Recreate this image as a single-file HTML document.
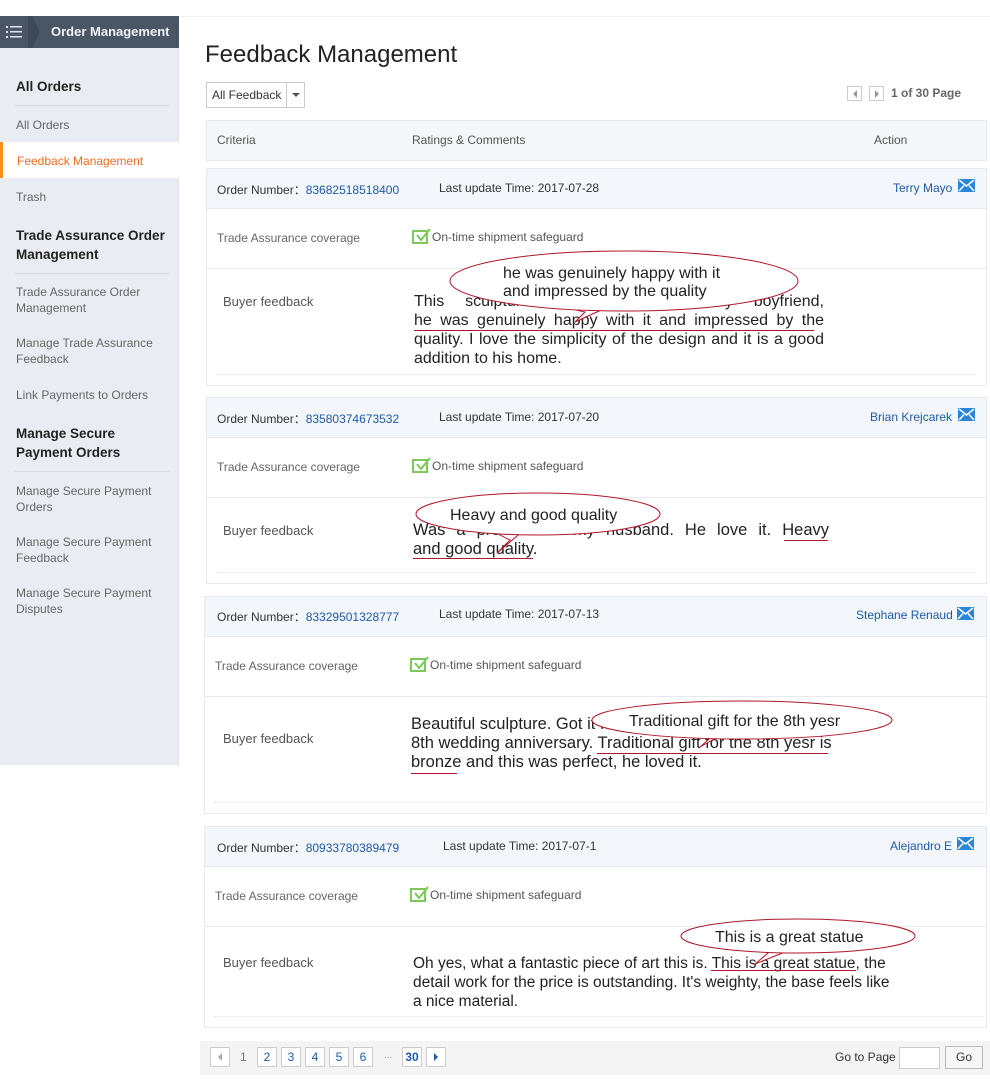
<!DOCTYPE html>
<html><head><meta charset="utf-8"><style>
*{margin:0;padding:0;box-sizing:border-box}
body{width:990px;height:1089px;background:#fff;font-family:"Liberation Sans",Arial,sans-serif;position:relative;overflow:hidden;color:#333}
.a{position:absolute;white-space:nowrap}
.side{position:absolute;left:0;top:48px;width:179px;height:717px;background:#e9edf3;border-right:1px solid #dde2e9}
.sh{position:absolute;left:0;top:16px;width:179px;height:32px;background:#4a5666}
.nav{font-size:12px;color:#666;line-height:16px}
.navb{font-size:13.5px;font-weight:bold;color:#222;line-height:19px}
.sep{position:absolute;left:14px;width:156px;height:1px;background:#d8dde4}
.box{position:absolute;border:1px solid #e6e9ee;background:#fff}
.orow{position:absolute;left:0;right:0;top:0;height:40px;background:#f3f6fa;border-bottom:1px solid #e6e9ee}
.crow{position:absolute;left:0;right:0;top:40px;height:60px;border-bottom:1px solid #e6e9ee}
.s12{font-size:12px}
.blue{color:#1c5aa8}
.fb{font-size:16px;line-height:19px;color:#222}
.fb div{white-space:nowrap}
.j{text-align:justify;text-align-last:justify}
.pg{position:absolute;top:1047px;height:20px;width:20px;border:1px solid #ccc;background:#fff;font-size:12px;color:#1c5aa8;text-align:center;line-height:18px}
.chk{display:inline-block;width:16px;height:14px;border:2px solid #7cc95a;vertical-align:-3px;margin-right:4px;position:relative}
.chk svg{position:absolute;left:1px;top:-4px}
.u{position:absolute;height:1px;background:#b0172a}
</style></head><body>
<div class="sh"><svg class="a" style="left:6px;top:9px" width="18" height="14"><g fill="#dfe4ea"><rect x="0" y="1" width="2" height="2"/><rect x="4" y="1" width="12" height="1.5"/><rect x="0" y="6" width="2" height="2"/><rect x="4" y="6" width="12" height="1.5"/><rect x="0" y="11" width="2" height="2"/><rect x="4" y="11" width="12" height="1.5"/></g></svg>
<svg class="a" style="left:28px;top:0" width="12" height="32"><polygon points="0,0 4,0 12,16 4,32 0,32" fill="#3e4957"/></svg>
<div class="a" style="left:51px;top:8px;font-size:13px;font-weight:bold;color:#f0f3f6">Order Management</div></div>
<div class="side">
<div class="a navb" style="left:16px;top:29px">All Orders</div>
<div class="sep" style="top:57px"></div>
<div class="a nav" style="left:16px;top:69px">All Orders</div>
<div class="a" style="left:0;top:94px;width:179px;height:36px;background:#fff;border-left:3px solid #f7901e"></div>
<div class="a nav" style="left:17px;top:105px;color:#f26c22">Feedback Management</div>
<div class="a nav" style="left:16px;top:141px">Trash</div>
<div class="a navb" style="left:16px;top:178px;white-space:normal;width:160px">Trade Assurance Order Management</div>
<div class="sep" style="top:225px"></div>
<div class="a nav" style="left:16px;top:236px;white-space:normal;width:150px">Trade Assurance Order Management</div>
<div class="a nav" style="left:16px;top:287px;white-space:normal;width:150px">Manage Trade Assurance Feedback</div>
<div class="a nav" style="left:16px;top:339px">Link Payments to Orders</div>
<div class="a navb" style="left:16px;top:376px;white-space:normal;width:150px">Manage Secure Payment Orders</div>
<div class="sep" style="top:423px"></div>
<div class="a nav" style="left:16px;top:435px;white-space:normal;width:150px">Manage Secure Payment Orders</div>
<div class="a nav" style="left:16px;top:486px;white-space:normal;width:150px">Manage Secure Payment Feedback</div>
<div class="a nav" style="left:16px;top:537px;white-space:normal;width:150px">Manage Secure Payment Disputes</div>
</div>
<div class="a" style="left:180px;top:16px;width:810px;height:1px;background:#f0f0f0"></div>
<div class="a" style="left:205px;top:41px;font-size:24px;color:#222">Feedback Management</div>
<div class="a" style="left:206px;top:82px;width:99px;height:26px;border:1px solid #ccc;font-size:12px;line-height:24px;padding-left:5px;color:#333">All Feedback<div class="a" style="left:79px;top:0;width:1px;height:24px;background:#ccc"></div><svg class="a" style="left:85px;top:10px" width="8" height="5"><polygon points="0,0 8,0 4,4" fill="#555"/></svg></div>
<div class="a" style="left:847px;top:86px;width:15px;height:15px;border:1px solid #ccc"><svg class="a" style="left:4px;top:3px" width="6" height="8"><polygon points="5,0 5,8 1,4" fill="#999"/></svg></div>
<div class="a" style="left:869px;top:86px;width:15px;height:15px;border:1px solid #ccc"><svg class="a" style="left:4px;top:3px" width="6" height="8"><polygon points="1,0 1,8 5,4" fill="#999"/></svg></div>
<div class="a" style="left:891px;top:86px;font-size:12px;font-weight:bold;color:#666">1 of 30 Page</div>
<div class="a" style="left:206px;top:120px;width:781px;height:41px;background:#f5f7fa;border:1px solid #e6e9ee"></div>
<div class="a s12" style="left:217px;top:133px;color:#555">Criteria</div>
<div class="a s12" style="left:412px;top:133px;color:#555">Ratings &amp; Comments</div>
<div class="a s12" style="left:874px;top:133px;color:#555">Action</div>

<!-- block 1 -->
<div class="box" style="left:206px;top:168px;width:781px;height:218px">
<div class="orow"></div><div class="crow"></div></div>
<div class="a s12" style="left:217px;top:181px">Order Number：<span class="blue">83682518518400</span></div>
<div class="a s12" style="left:439px;top:181px">Last update Time: 2017-07-28</div>
<div class="a s12 blue" style="left:893px;top:181px">Terry Mayo</div>
<div class="a s12" style="left:217px;top:231px;color:#666">Trade Assurance coverage</div>
<div class="a s12" style="left:412px;top:230px;color:#555"><span class="chk"><svg width="16" height="16"><path d="M2 7 L6 12 L15 1" stroke="#7cc95a" stroke-width="2" fill="none"/></svg></span>On-time shipment safeguard</div>
<div class="a" style="left:223px;top:294px;color:#555;font-size:13px">Buyer feedback</div>
<div class="a fb" style="left:414px;top:292px;width:410px">
<div class="j">This sculpture was a gift for my boyfriend,</div>
<div class="j">he was genuinely happy with it and impressed by the</div>
<div class="j">quality. I love the simplicity of the design and it is a good</div>
<div>addition to his home.</div></div>
<div class="u" style="left:414px;top:330px;width:400px"></div>
<div class="a" style="left:216px;top:374px;width:760px;border-top:1px dotted #e3e3e3"></div>

<!-- block 2 -->
<div class="box" style="left:206px;top:397px;width:781px;height:187px">
<div class="orow"></div><div class="crow"></div></div>
<div class="a s12" style="left:217px;top:410px">Order Number：<span class="blue">83580374673532</span></div>
<div class="a s12" style="left:439px;top:410px">Last update Time: 2017-07-20</div>
<div class="a s12 blue" style="left:870px;top:410px">Brian Krejcarek</div>
<div class="a s12" style="left:217px;top:460px;color:#666">Trade Assurance coverage</div>
<div class="a s12" style="left:412px;top:459px;color:#555"><span class="chk"><svg width="16" height="16"><path d="M2 7 L6 12 L15 1" stroke="#7cc95a" stroke-width="2" fill="none"/></svg></span>On-time shipment safeguard</div>
<div class="a" style="left:223px;top:523px;color:#555;font-size:13px">Buyer feedback</div>
<div class="a fb" style="left:413px;top:521px;width:416px;font-size:16.5px">
<div class="j">Was a present for my husband. He love it. Heavy</div>
<div>and good quality.</div></div>
<div class="u" style="left:784px;top:540px;width:44px"></div>
<div class="u" style="left:413px;top:558px;width:120px"></div>
<div class="a" style="left:216px;top:572px;width:760px;border-top:1px dotted #e3e3e3"></div>

<!-- block 3 -->
<div class="box" style="left:204px;top:596px;width:783px;height:218px">
<div class="orow"></div><div class="crow"></div></div>
<div class="a s12" style="left:217px;top:608px">Order Number：<span class="blue">83329501328777</span></div>
<div class="a s12" style="left:439px;top:607px">Last update Time: 2017-07-13</div>
<div class="a s12 blue" style="left:856px;top:608px">Stephane Renaud</div>
<div class="a s12" style="left:215px;top:659px;color:#666">Trade Assurance coverage</div>
<div class="a s12" style="left:410px;top:658px;color:#555"><span class="chk"><svg width="16" height="16"><path d="M2 7 L6 12 L15 1" stroke="#7cc95a" stroke-width="2" fill="none"/></svg></span>On-time shipment safeguard</div>
<div class="a" style="left:223px;top:731px;color:#555;font-size:13px">Buyer feedback</div>
<div class="a fb" style="left:411px;top:715px;font-size:16.5px">
<div>Beautiful sculpture. Got it for our</div>
<div>8th wedding anniversary. Traditional gift for the 8th yesr is</div>
<div>bronze and this was perfect, he loved it.</div></div>
<div class="u" style="left:597px;top:753px;width:231px"></div>
<div class="u" style="left:411px;top:773px;width:46px"></div>
<div class="a" style="left:214px;top:802px;width:770px;border-top:1px dotted #e3e3e3"></div>

<!-- block 4 -->
<div class="box" style="left:204px;top:826px;width:783px;height:202px">
<div class="orow"></div><div class="crow"></div></div>
<div class="a s12" style="left:217px;top:839px">Order Number：<span class="blue">80933780389479</span></div>
<div class="a s12" style="left:443px;top:839px">Last update Time: 2017-07-1</div>
<div class="a s12 blue" style="left:890px;top:839px">Alejandro E</div>
<div class="a s12" style="left:215px;top:889px;color:#666">Trade Assurance coverage</div>
<div class="a s12" style="left:410px;top:888px;color:#555"><span class="chk"><svg width="16" height="16"><path d="M2 7 L6 12 L15 1" stroke="#7cc95a" stroke-width="2" fill="none"/></svg></span>On-time shipment safeguard</div>
<div class="a" style="left:223px;top:955px;color:#555;font-size:13px">Buyer feedback</div>
<div class="a fb" style="left:413px;top:954px;font-size:15.5px">
<div>Oh yes, what a fantastic piece of art this is. This is a great statue, the</div>
<div>detail work for the price is outstanding. It's weighty, the base feels like</div>
<div>a nice material.</div></div>
<div class="u" style="left:711px;top:970px;width:145px"></div>
<div class="a" style="left:214px;top:1016px;width:770px;border-top:1px dotted #e3e3e3"></div>

<!-- mail icons -->
<svg class="a" style="left:958px;top:179px" width="17" height="13"><rect width="17" height="13" fill="#2a86d8"/><path d="M1 1 L8.5 7 L16 1 M1 12 L6 6.5 M16 12 L11 6.5" stroke="#fff" stroke-width="1.5" fill="none"/></svg>
<svg class="a" style="left:958px;top:408px" width="17" height="13"><rect width="17" height="13" fill="#2a86d8"/><path d="M1 1 L8.5 7 L16 1 M1 12 L6 6.5 M16 12 L11 6.5" stroke="#fff" stroke-width="1.5" fill="none"/></svg>
<svg class="a" style="left:957px;top:607px" width="17" height="13"><rect width="17" height="13" fill="#2a86d8"/><path d="M1 1 L8.5 7 L16 1 M1 12 L6 6.5 M16 12 L11 6.5" stroke="#fff" stroke-width="1.5" fill="none"/></svg>
<svg class="a" style="left:957px;top:837px" width="17" height="13"><rect width="17" height="13" fill="#2a86d8"/><path d="M1 1 L8.5 7 L16 1 M1 12 L6 6.5 M16 12 L11 6.5" stroke="#fff" stroke-width="1.5" fill="none"/></svg>

<!-- callouts -->
<svg class="a" style="left:0;top:0" width="990" height="1089">
<g fill="#fff" stroke="#b0172a" stroke-width="1">
<polygon points="540,302 585,312 575,322 610,306"/>
<ellipse cx="624" cy="281" rx="174" ry="30"/>
<polygon points="470,520 510,540 497,553 530,525"/>
<ellipse cx="538" cy="514" rx="122" ry="21"/>
<polygon points="670,727 715,734 700,747 730,730"/>
<ellipse cx="742" cy="720" rx="150" ry="19"/>
<polygon points="750,945 768,953 755,964 790,950"/>
<ellipse cx="798" cy="936" rx="117" ry="17"/>
</g>
<g fill="#222" font-family="Liberation Sans, Arial, sans-serif" font-size="16">
<text x="503" y="278">he was genuinely happy with it</text>
<text x="503" y="296">and impressed by the quality</text>
<text x="450" y="520">Heavy and good quality</text>
<text x="629" y="726">Traditional gift for the 8th yesr</text>
<text x="715" y="942">This is a great statue</text>
</g>
</svg>

<!-- pagination -->
<div class="a" style="left:200px;top:1041px;width:790px;height:34px;background:#f4f4f4"></div>
<div class="pg" style="left:210px"><svg style="margin-top:5px" width="6" height="8"><polygon points="5,0 5,8 1,4" fill="#aaa"/></svg></div>
<div class="a s12" style="left:240px;top:1050px;color:#777">1</div>
<div class="pg" style="left:257px">2</div>
<div class="pg" style="left:281px">3</div>
<div class="pg" style="left:305px">4</div>
<div class="pg" style="left:329px">5</div>
<div class="pg" style="left:353px">6</div>
<div class="a" style="left:384px;top:1050px;font-size:10px;color:#999">...</div>
<div class="pg" style="left:402px;font-weight:bold">30</div>
<div class="pg" style="left:426px"><svg style="margin-top:5px" width="6" height="8"><polygon points="1,0 1,8 5,4" fill="#1c5aa8"/></svg></div>
<div class="a s12" style="left:835px;top:1050px;color:#333">Go to Page</div>
<div class="a" style="left:899px;top:1047px;width:41px;height:22px;border:1px solid #ccc;background:#fff"></div>
<div class="a" style="left:945px;top:1046px;width:38px;height:23px;border:1px solid #bbb;background:#f7f7f7;font-size:12px;text-align:center;line-height:21px">Go</div>
</body></html>
